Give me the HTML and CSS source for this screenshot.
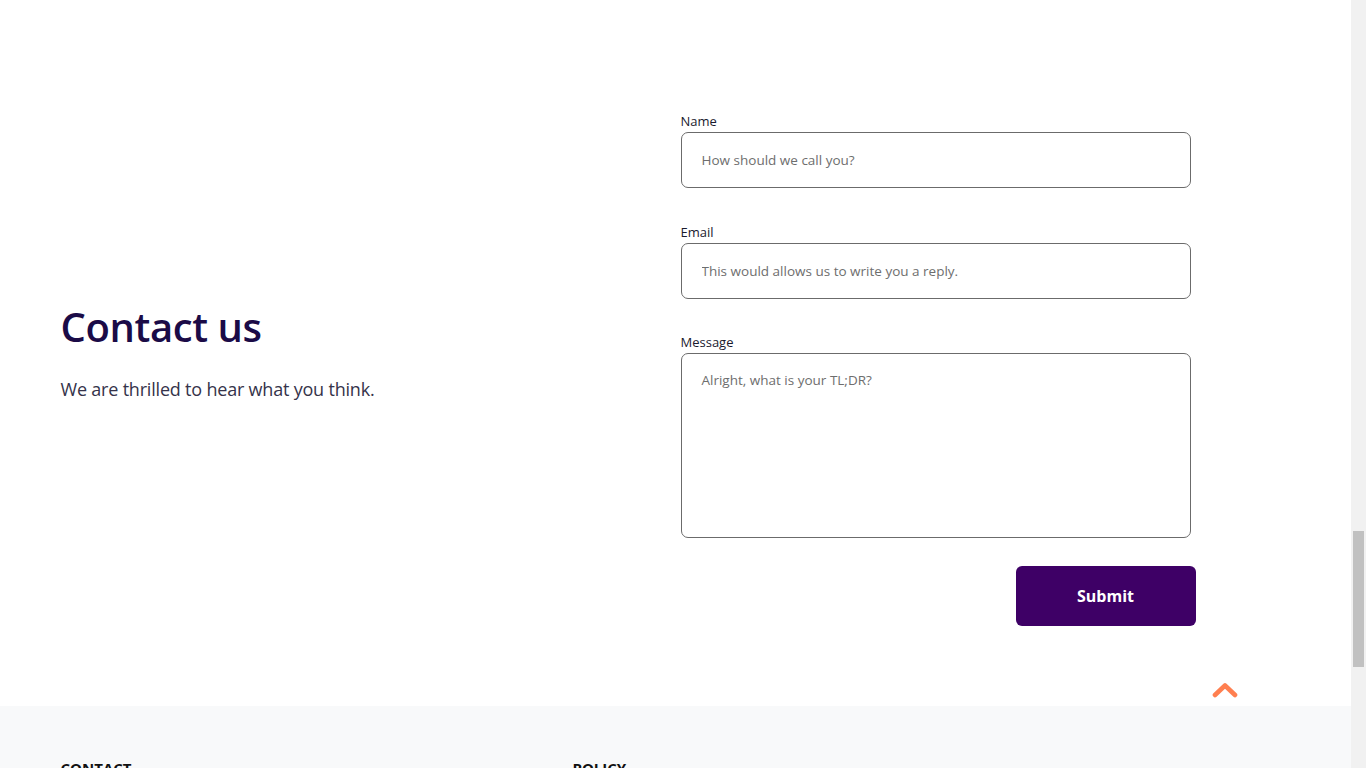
FILE: index.html
```html
<!DOCTYPE html>
<html lang="en">
<head>
<meta charset="utf-8">
<title>Contact us</title>
<link rel="stylesheet" href="styles.css">
</head>
<body>
<div class="page">
  <main class="contact">
    <div class="contact-intro">
      <h1 class="contact-title">Contact us</h1>
      <p class="contact-lead">We are thrilled to hear what you think.</p>
    </div>
    <form class="contact-form">
      <label class="field field-first">
        <span class="field-label">Name</span>
        <input class="field-input" type="text" placeholder="How should we call you?">
      </label>
      <label class="field">
        <span class="field-label">Email</span>
        <input class="field-input" type="email" placeholder="This would allows us to write you a reply.">
      </label>
      <label class="field field-last">
        <span class="field-label">Message</span>
        <textarea class="field-input field-area" placeholder="Alright, what is your TL;DR?"></textarea>
      </label>
      <div class="form-actions">
        <button class="submit" type="button">Submit</button>
      </div>
    </form>
  </main>
  <div class="totop-row">
    <a class="totop" href="#">
      <svg width="26" height="16" viewBox="0 0 26 16"><path d="M3 13 L13 3.5 L23 13" fill="none" stroke="#ff7f50" stroke-width="4.6" stroke-linecap="round" stroke-linejoin="round"/></svg>
    </a>
  </div>
  <footer class="footer">
    <div class="footer-inner">
      <div class="footer-col">
        <h4 class="footer-heading">CONTACT</h4>
        <p class="footer-text">hello@example.com</p>
      </div>
      <div class="footer-col">
        <h4 class="footer-heading">POLICY</h4>
        <p class="footer-text">Privacy policy</p>
      </div>
    </div>
  </footer>
</div>
<div class="scrollbar"><div class="scrollbar-thumb"></div></div>
</body>
</html>
```
FILE: styles.css
```css
html, body {
  margin: 0;
  padding: 0;
}
body {
  font-family: "Open Sans", "Noto Sans", sans-serif;
  background: #ffffff;
  color: #1a1a2e;
}
.page {
  width: 1351px;
}
.contact {
  display: grid;
  grid-template-columns: 620px 515px;
  width: 1230px;
  margin: 0 auto;
  padding: 112px 0 0 0;
  box-sizing: border-box;
}
.contact-intro {
  display: flex;
  flex-direction: column;
  justify-content: center;
  padding-bottom: 34px;
}
.contact-title {
  margin: 0;
  font-size: 40px;
  font-weight: 600;
  color: #1b0b47;
  letter-spacing: -0.4px;
  line-height: 1.2;
}
.contact-lead {
  margin: 26px 0 0 0;
  font-size: 18px;
  color: #35334a;
  letter-spacing: -0.2px;
}
.contact-form {
  display: flex;
  flex-direction: column;
}
.field {
  display: flex;
  flex-direction: column;
  width: 510px;
  margin-bottom: 34px;
}
.field-first {
  margin-bottom: 35px;
}
.field-last {
  margin-bottom: 28px;
}
.field-label {
  font-size: 13px;
  color: #1a1a2e;
  line-height: 18px;
  margin-bottom: 2px;
}
.field-input {
  box-sizing: border-box;
  height: 56px;
  border: 1px solid #6b6b6b;
  border-radius: 7px;
  padding: 0 20px;
  font-family: inherit;
  font-size: 13.5px;
  color: #333;
  background: #fff;
}
.field-input::placeholder {
  color: #6e6e6e;
}
.field-area {
  height: 185px;
  padding-top: 17px;
  resize: none;
}
.form-actions {
  display: flex;
  justify-content: flex-end;
}
.submit {
  width: 180px;
  height: 60px;
  border: none;
  border-radius: 6px;
  background: #3e0066;
  color: #fff;
  font-family: inherit;
  font-size: 16px;
  font-weight: 700;
}
.totop-row {
  display: flex;
  justify-content: flex-end;
  width: 1230px;
  margin: 0 auto;
  padding: 55px 0 9px 0;
}
.totop {
  display: block;
  width: 26px;
  height: 16px;
  margin-right: 53px;
}
.footer {
  background: #f8f9fa;
  min-height: 300px;
}
.footer-inner {
  display: grid;
  grid-template-columns: 512px 512px;
  width: 1230px;
  margin: 0 auto;
  padding-top: 52px;
}
.footer-heading {
  margin: 0;
  font-size: 15px;
  font-weight: 700;
  color: #111;
}
.footer-text {
  font-size: 14px;
  color: #444;
}
.scrollbar {
  position: fixed;
  top: 0;
  right: 0;
  width: 15px;
  height: 100vh;
  background: #f1f1f1;
}
.scrollbar-thumb {
  position: absolute;
  left: 2px;
  right: 2px;
  top: 531px;
  height: 136px;
  background: #c1c1c1;
}
```
